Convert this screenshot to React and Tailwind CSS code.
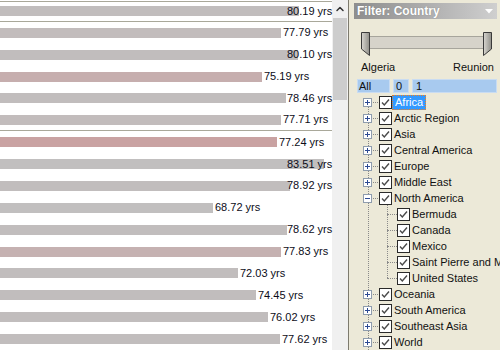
import { ChevronUp } from 'lucide-react'

const rows = [
  { v: 80.19, color: 'bg-[#c1bdbd]', sep: true },
  { v: 77.79, color: 'bg-[#c2bcbc]' },
  { v: 80.1, color: 'bg-[#c1bdbd]' },
  { v: 75.19, color: 'bg-[#c6aeae]' },
  { v: 78.46, color: 'bg-[#c1bdbd]' },
  { v: 77.71, color: 'bg-[#c2bcbc]', sep: true },
  { v: 77.24, color: 'bg-[#c9a2a2]' },
  { v: 83.51, color: 'bg-[#c1bfbf]' },
  { v: 78.92, color: 'bg-[#c1bdbd]' },
  { v: 68.72, color: 'bg-[#c1bfbf]' },
  { v: 78.62, color: 'bg-[#c1bdbd]' },
  { v: 77.83, color: 'bg-[#c5b1b1]' },
  { v: 72.03, color: 'bg-[#c1bdbd]' },
  { v: 74.45, color: 'bg-[#c1bdbd]' },
  { v: 76.02, color: 'bg-[#c1bdbd]' },
  { v: 77.62, color: 'bg-[#c1bdbd]' },
]

const regions = [
  { name: 'Africa', selected: true },
  { name: 'Arctic Region' },
  { name: 'Asia' },
  { name: 'Central America' },
  { name: 'Europe' },
  { name: 'Middle East' },
  {
    name: 'North America',
    open: true,
    children: ['Bermuda', 'Canada', 'Mexico', 'Saint Pierre and Miquelon', 'United States'],
  },
  { name: 'Oceania' },
  { name: 'South America' },
  { name: 'Southeast Asia' },
  { name: 'World' },
]

function BarRow({ row, first }) {
  const w = Math.round((row.v - 40.33) * 7.505)
  const left = Math.min(w + 2, 287)
  return (
    <div
      className={`relative flex items-center ${first ? 'h-[20px]' : 'h-[22px]'} ${
        row.sep ? 'border-b border-[#a9a89a]' : ''
      }`}
    >
      <div className={`h-[10px] ${row.color}`} style={{ width: w }} />
      <span
        className="absolute whitespace-nowrap text-[11px] leading-none text-[#0c0c18]"
        style={{ left }}
      >
        {row.v.toFixed(2)} yrs
      </span>
    </div>
  )
}

function Checkbox() {
  return (
    <div className="w-[13px] h-[13px] shrink-0 border border-[#2a2a2a] bg-white flex items-center justify-center">
      <svg width="11" height="11" viewBox="0 0 11 11">
        <path d="M2 5.5 L4.3 8 L9 2.5" fill="none" stroke="#4a4a4a" strokeWidth="1.4" />
      </svg>
    </div>
  )
}

function Expander({ open }) {
  return (
    <div className="relative w-[9px] h-[9px] shrink-0 border border-[#8e9cad] bg-white flex items-center justify-center">
      <svg width="7" height="7" viewBox="0 0 7 7">
        <path d="M1 3.5 H6" stroke="#2c4a93" strokeWidth="1" />
        {!open && <path d="M3.5 1 V6" stroke="#2c4a93" strokeWidth="1" />}
      </svg>
    </div>
  )
}

function Handle({ flip }) {
  return (
    <svg width="9" height="24" viewBox="0 0 9 24" className="shrink-0">
      <defs>
        <linearGradient id={flip ? 'hr' : 'hl'} x1="0" y1="0" x2="1" y2="0">
          <stop offset="0" stopColor="#d8d6d0" />
          <stop offset="1" stopColor="#8f8e88" />
        </linearGradient>
      </defs>
      <path
        d={flip ? 'M0.5 0.5 H8.5 V17 L0.5 23.5 Z' : 'M0.5 0.5 H8.5 V23.5 L0.5 17 Z'}
        fill={`url(#${flip ? 'hr' : 'hl'})`}
        stroke="#3a3a3a"
      />
    </svg>
  )
}

function App() {
  return (
    <div className="flex w-[500px] h-[350px] overflow-hidden bg-white font-['Liberation_Sans',Arial,sans-serif]">
      {/* chart */}
      <div className="w-[332px] shrink-0 flex flex-col">
        <div className="mt-px h-px bg-[#a9a89a]" />
        {rows.map((row, i) => (
          <BarRow key={i} row={row} first={i === 0} />
        ))}
      </div>

      {/* scrollbar */}
      <div className="w-[16px] shrink-0 bg-[#f0f0f0] flex flex-col">
        <div className="h-[17px] flex items-center justify-center">
          <ChevronUp size={12} strokeWidth={3} className="text-[#333]" />
        </div>
        <div className="mt-px h-[82px] mx-px bg-[#cdcdcd]" />
      </div>
      <div className="w-px shrink-0 bg-[#7d7a6e]" />

      {/* filter panel */}
      <div className="flex-1 min-w-0 overflow-hidden bg-[#ece9d8] flex flex-col">
        <div className="mt-[3px] ml-[5px] mr-[3px] h-[17px] bg-linear-to-r from-[#8e8e8e] to-[#cfcfcf] flex items-center justify-between pl-[3px] pr-[4px]">
          <span className="text-[12px] font-bold text-white leading-none [text-shadow:0_0_1px_#777]">
            Filter: Country
          </span>
          <svg width="8" height="5" viewBox="0 0 8 5">
            <path d="M0 0 H8 L4 4.5 Z" fill="#fff" />
          </svg>
        </div>

        {/* range slider */}
        <div className="mt-[13px] ml-[12px] mr-[8px] h-[24px] flex items-start">
          <Handle />
          <div className="flex-1 mt-[4px] h-[13px] border-t border-b border-[#a7a59c] bg-[#d6d3ca]" />
          <Handle flip />
        </div>
        <div className="mt-[4px] ml-[12px] mr-[6px] flex justify-between text-[11px] leading-[14px] text-[#111]">
          <span>Algeria</span>
          <span>Reunion</span>
        </div>

        {/* search boxes */}
        <div className="mt-[5px] ml-[8px] mr-[3px] flex gap-[3px] h-[14px] text-[11px] leading-[12px] text-[#111]">
          <div className="w-[33px] bg-[#a8caef] border border-[#c9dcf2] pl-[1px]">All</div>
          <div className="w-[16px] bg-[#a8caef] border border-[#c9dcf2] pl-[2px]">0</div>
          <div className="flex-1 bg-[#a8caef] border border-[#c9dcf2] pl-[3px]">1</div>
        </div>

        {/* tree */}
        <div className="relative mt-px text-[11px] text-[#111]">
          <div className="absolute left-[19px] top-[13px] bottom-[-40px] border-l border-dotted border-[#8a8a8a]" />
          <div className="absolute left-[38px] top-[111px] h-[73px] border-l border-dotted border-[#8a8a8a]" />
          {regions.map((r) => (
            <div key={r.name}>
              <div className="relative h-[16px] flex items-center pl-[14px]">
                <Expander open={r.open} />
                <div className="w-[5px] shrink-0 mx-px border-t border-dotted border-[#8a8a8a]" />
                <Checkbox />
                {r.selected ? (
                  <span className="h-[15px] px-[2px] flex items-center bg-[#3399ff] text-white border border-dotted border-[#f08020] leading-none">
                    {r.name}
                  </span>
                ) : (
                  <span className="ml-[2px] leading-none whitespace-nowrap">{r.name}</span>
                )}
              </div>
              {r.children &&
                r.children.map((c) => (
                  <div key={c} className="relative h-[16px] flex items-center pl-[38px] whitespace-nowrap">
                    <div className="w-[10px] shrink-0 border-t border-dotted border-[#8a8a8a]" />
                    <Checkbox />
                    <span className="ml-[2px] leading-none">{c}</span>
                  </div>
                ))}
            </div>
          ))}
        </div>
      </div>
    </div>
  )
}

export default App
